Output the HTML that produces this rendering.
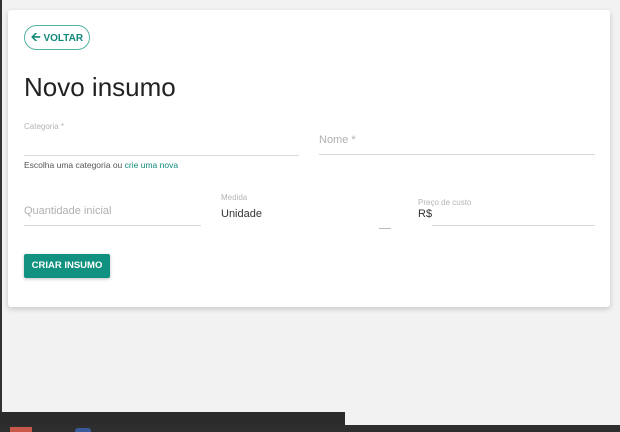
<!DOCTYPE html>
<html><head><style>
*{box-sizing:border-box;margin:0;padding:0}
body{width:620px;height:432px;background:#f2f2f2;font-family:"Liberation Sans",sans-serif;position:relative;overflow:hidden}
.lb{position:absolute;left:0;top:0;width:2px;height:412px;background:#333}
.card{position:absolute;left:8px;top:10px;width:602px;height:297px;background:#fff;border-radius:3px;box-shadow:0 2px 6px rgba(0,0,0,.18)}
.abs{position:absolute}
.btn{left:16px;top:15px;width:66px;height:25px;border:1px solid #52b3a3;border-radius:13px;color:#12897a;font-size:10px;font-weight:bold;line-height:23px;text-align:center}
h1{position:absolute;left:16px;top:62px;font-size:26px;font-weight:normal;color:#222}
.lbl{color:#b5b5b5;font-size:8px}
.ph{color:#b0b0b0;font-size:11px}
.line{height:1px;background:#d8d8d8}
.cta{left:16px;top:244px;width:86px;height:24px;background:#11917f;color:#fff;font-size:9.5px;font-weight:bold;line-height:24px;text-align:center;border-radius:2px;box-shadow:0 1px 3px rgba(0,0,0,.25)}
</style></head><body>
<div class="lb"></div>
<div class="card">
<div class="abs btn"><span style="font-size:12px">&#129128;</span> VOLTAR</div>
<h1>Novo insumo</h1>
<div class="abs lbl" style="left:16px;top:112px">Categoria *</div>
<div class="abs line" style="left:16px;top:145px;width:275px"></div>
<div class="abs" style="left:16px;top:150px;font-size:8.5px;color:#555">Escolha uma categoria ou <span style="color:#12897a">crie uma nova</span></div>
<div class="abs ph" style="left:311px;top:124px">Nome *</div>
<div class="abs line" style="left:311px;top:144px;width:276px"></div>
<div class="abs ph" style="left:16px;top:195px">Quantidade inicial</div>
<div class="abs line" style="left:16px;top:215px;width:177px"></div>
<div class="abs lbl" style="left:213px;top:183px">Medida</div>
<div class="abs" style="left:213px;top:198px;font-size:11px;color:#333">Unidade</div>
<div class="abs line" style="left:371px;top:218px;width:12px;background:#bbb"></div>
<div class="abs lbl" style="left:410px;top:188px">Preço de custo</div>
<div class="abs" style="left:410px;top:198px;font-size:11px;color:#333">R$</div>
<div class="abs line" style="left:424px;top:215px;width:163px"></div>
<div class="abs cta">CRIAR INSUMO</div>
</div>
<div class="abs" style="left:0;top:412px;width:345px;height:14px;background:#2b2b2b"></div>
<div class="abs" style="left:0;top:425px;width:620px;height:7px;background:#2e2e2e"></div>
<div class="abs" style="left:10px;top:427px;width:22px;height:5px;background:#c8584a"></div>
<div class="abs" style="left:75px;top:428px;width:16px;height:4px;background:#3a5a9a;border-radius:3px 3px 0 0"></div>
</body></html>
